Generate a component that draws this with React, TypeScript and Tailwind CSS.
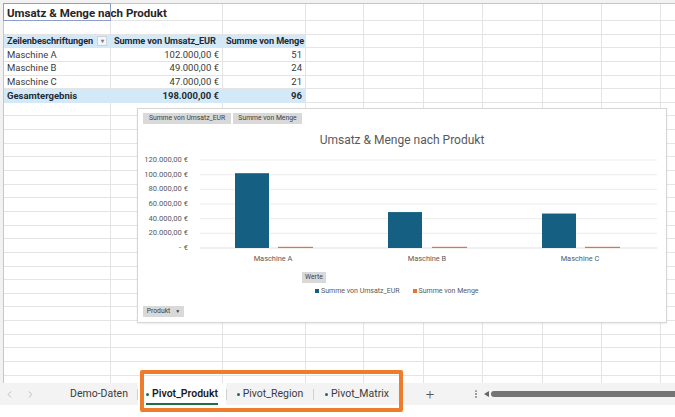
import React from "react";
import { ChevronLeft, ChevronRight, EllipsisVertical } from "lucide-react";

const COL_W = [
  "w-[107px]",
  "w-[112px]",
  "w-[83px]",
  "w-[58px]",
  "w-[60px]",
  "w-[59px]",
  "w-[60px]",
  "w-[59px]",
  "w-[59px]",
  "w-[60px]",
];

type Row = {
  kind: "title" | "header" | "data" | "total" | "empty";
  a?: string;
  b?: string;
  c?: string;
};

const rows: Row[] = [
  { kind: "title", a: "Umsatz & Menge nach Produkt" },
  { kind: "empty" },
  { kind: "header", a: "Zeilenbeschriftungen", b: "Summe von Umsatz_EUR", c: "Summe von Menge" },
  { kind: "data", a: "Maschine A", b: "102.000,00 €", c: "51" },
  { kind: "data", a: "Maschine B", b: "49.000,00 €", c: "24" },
  { kind: "data", a: "Maschine C", b: "47.000,00 €", c: "21" },
  { kind: "total", a: "Gesamtergebnis", b: "198.000,00 €", c: "96" },
];
for (let i = 0; i < 22; i++) rows.push({ kind: "empty" });

function Cell({ row, col }: { row: Row; col: number }) {
  const blue = row.kind === "header" || row.kind === "total";
  const inTable = col < 3;
  const bg = blue && inTable ? "bg-[#d4e9f8] border-[#d4e9f8]" : "border-[#e4e4e4]";
  let content: React.ReactNode = null;
  if (row.kind === "title" && col === 0) {
    content = (
      <>
        <span className="absolute left-[3px] top-[1px] whitespace-nowrap text-[11.5px] font-bold leading-[16px] text-[#262626] z-0">
          {row.a}
        </span>
        <span className="absolute -left-px -top-px right-[-1px] bottom-[-1px] border border-[#8c9fc9] z-10" />
      </>
    );
  } else if (row.kind !== "empty" && row.kind !== "title" && inTable) {
    const txt = col === 0 ? row.a : col === 1 ? row.b : row.c;
    const bold = row.kind === "header" || row.kind === "total";
    const right = row.kind !== "header" && col > 0;
    content = (
      <div
        className={`flex h-full items-center whitespace-nowrap px-[3px] leading-none ${
          row.kind === "header" ? "text-[9.2px] tracking-[-0.1px]" : "text-[9.5px]"
        } ${bold ? "font-bold text-[#1e2b36]" : "text-[#3a3a3a]"} ${right ? "justify-end" : "justify-start"}`}
      >
        <span>{txt}</span>
        {row.kind === "header" && col === 0 && (
          <span className="ml-auto flex h-[10px] w-[10px] items-center justify-center border border-[#c9d3dc] bg-[#f4f7fa] text-[6px] text-[#7a7a7a]">
            ▾
          </span>
        )}
      </div>
    );
  }
  return (
    <div className={`relative h-full shrink-0 border-r border-b ${bg} ${COL_W[col]}`}>{content}</div>
  );
}

function Chart() {
  const yLabels = [
    { y: 160, t: "120.000,00 €" },
    { y: 174.7, t: "100.000,00 €" },
    { y: 189.3, t: "80.000,00 €" },
    { y: 204, t: "60.000,00 €" },
    { y: 218.7, t: "40.000,00 €" },
    { y: 233.3, t: "20.000,00 €" },
  ];
  const base = 248;
  const k = 0.7333;
  const bars = [
    { x: 235, v: 102, ox: 278, label: "Maschine A", lx: 273 },
    { x: 388, v: 49, ox: 432, label: "Maschine B", lx: 427 },
    { x: 542, v: 47, ox: 585, label: "Maschine C", lx: 580 },
  ];
  return (
    <div className="absolute left-[137px] top-[108px] z-20 flex h-[215px] w-[530px] flex-col border border-[#d6d6d6] bg-white shadow-[0_1px_2px_rgba(0,0,0,0.08)] font-['Roboto',sans-serif]">
      <div className="ml-[5px] mt-[4px] flex h-[11px] gap-[2px]">
        <div className="flex w-[88px] items-center justify-center bg-[#d9d9d9] text-[6.8px] text-[#404040]">
          Summe von Umsatz_EUR
        </div>
        <div className="flex w-[69px] items-center justify-center bg-[#d9d9d9] text-[6.8px] text-[#404040]">
          Summe von Menge
        </div>
      </div>
      <div className="mt-[8px] h-[16px] text-center text-[12px] leading-[16px] text-[#595959]">
        Umsatz &amp; Menge nach Produkt
      </div>
      <svg width="528" height="118" viewBox="138 148 528 118" className="block">
        {yLabels.map((l) => (
          <line key={"g" + l.y} x1={200} x2={657} y1={l.y} y2={l.y} stroke="#e6e6e6" strokeWidth={0.8} />
        ))}
        <line x1={200} x2={657} y1={base} y2={base} stroke="#d9d9d9" strokeWidth={0.8} />
        {yLabels.map((l) => (
          <text
            key={l.t}
            x={188}
            y={l.y}
            textAnchor="end"
            dominantBaseline="middle"
            fontSize="7.6"
            fill="#595959"
            fontFamily="Roboto, sans-serif"
          >
            {l.t}
          </text>
        ))}
        <text x={181} y={base} textAnchor="end" dominantBaseline="middle" fontSize="7.6" fill="#595959" fontFamily="Roboto, sans-serif">
          -
        </text>
        <text x={188} y={base} textAnchor="end" dominantBaseline="middle" fontSize="7.6" fill="#595959" fontFamily="Roboto, sans-serif">
          €
        </text>
        {bars.map((b) => (
          <g key={b.label}>
            <rect x={b.x} y={base - b.v * k} width={34} height={b.v * k} fill="#156082" />
            <rect x={b.ox} y={base - 1.2} width={35} height={1.2} fill="#e97132" />
            <text
              x={b.lx}
              y={259}
              textAnchor="middle"
              dominantBaseline="middle"
              fontSize="7.4"
              fill="#595959"
              fontFamily="Roboto, sans-serif"
            >
              {b.label}
            </text>
          </g>
        ))}
      </svg>
      <div className="ml-[164px] mt-[6px] flex h-[11px] w-[24px] items-center justify-center bg-[#d9d9d9] text-[6.8px] text-[#404040]">
        Werte
      </div>
      <div className="ml-[177px] mt-[3px] flex h-[10px] items-center text-[7px] text-[#595959]">
        <span className="mr-[2px] h-[4px] w-[4px] bg-[#156082]" />
        <span>Summe von Umsatz_EUR</span>
        <span className="ml-[13px] mr-[2px] h-[4px] w-[4px] bg-[#e97132]" />
        <span>Summe von Menge</span>
      </div>
      <div className="ml-[5px] mt-[10px] flex h-[11px] w-[41px] items-center justify-center gap-[5px] bg-[#d9d9d9] text-[6.8px] text-[#404040]">
        <span>Produkt</span>
        <span className="text-[5px]">▼</span>
      </div>
    </div>
  );
}

function Tab({ label, active, w }: { label: string; active?: boolean; w: string }) {
  return (
    <div className={`flex h-full shrink-0 items-center justify-center ${w} ${active ? "bg-white" : ""}`}>
      <div
        className={`flex h-full items-center gap-[3px] ${
          active ? "border-b-[2px] border-[#1d7044] pt-[2px] font-semibold text-[#1b1b1b]" : "text-[#3c3c3c]"
        }`}
      >
        <span className="h-[3px] w-[3px] rounded-full bg-[#1f6e43]" />
        <span>{label}</span>
      </div>
    </div>
  );
}

export default function App() {
  return (
    <div className="relative h-[417px] w-[675px] overflow-hidden bg-white font-['Roboto',sans-serif]">
      <div className="relative h-[383px] overflow-hidden bg-[#f2f2f2] pl-[3px] pt-[3px]">
        <div className="flex flex-col border-l border-t border-[#c6c6c6] bg-white">
          {rows.map((row, i) => (
            <div key={i} className={`flex shrink-0 ${i === 0 ? "h-[17px]" : "h-[13.65px]"}`}>
              {COL_W.map((_, c) => (
                <Cell key={c} row={row} col={c} />
              ))}
            </div>
          ))}
        </div>
        <Chart />
      </div>
      <div className="flex h-[22px] items-center bg-[#f3f3f3] text-[10.5px]">
        <div className="flex h-full w-[61px] shrink-0 items-center gap-[10px] pl-[4px] text-[#a3a3a3]">
          <ChevronLeft size={11} strokeWidth={1.5} />
          <ChevronRight size={11} strokeWidth={1.5} />
        </div>
        <div className="flex h-full w-[76px] shrink-0 items-center justify-center text-[#3c3c3c]">Demo-Daten</div>
        <div className="h-[11px] w-px shrink-0 bg-[#d0d0d0]" />
        <Tab label="Pivot_Produkt" active w="w-[88px]" />
        <div className="h-[11px] w-px shrink-0 bg-[#d0d0d0]" />
        <Tab label="Pivot_Region" w="w-[86px]" />
        <div className="h-[11px] w-px shrink-0 bg-[#d0d0d0]" />
        <Tab label="Pivot_Matrix" w="w-[86px]" />
        <div className="ml-[24px] w-[12px] shrink-0 text-center text-[15px] font-light leading-none text-[#555]">+</div>
        <EllipsisVertical size={10} strokeWidth={2.5} className="ml-[35px] shrink-0 text-[#777]" />
        <svg width="5" height="6" viewBox="0 0 5 6" className="ml-[3px] shrink-0">
          <path d="M5 0 L0 3 L5 6 Z" fill="#666" />
        </svg>
        <div className="ml-[2px] h-[6px] flex-1 rounded-l-full bg-[#747474]" />
      </div>
      <div className="h-[12px] bg-white" />
      <div className="pointer-events-none absolute left-[140px] top-[370px] z-30 h-[42px] w-[263px] rounded-[2px] border-[4px] border-[#ef7c2a]" />
    </div>
  );
}
